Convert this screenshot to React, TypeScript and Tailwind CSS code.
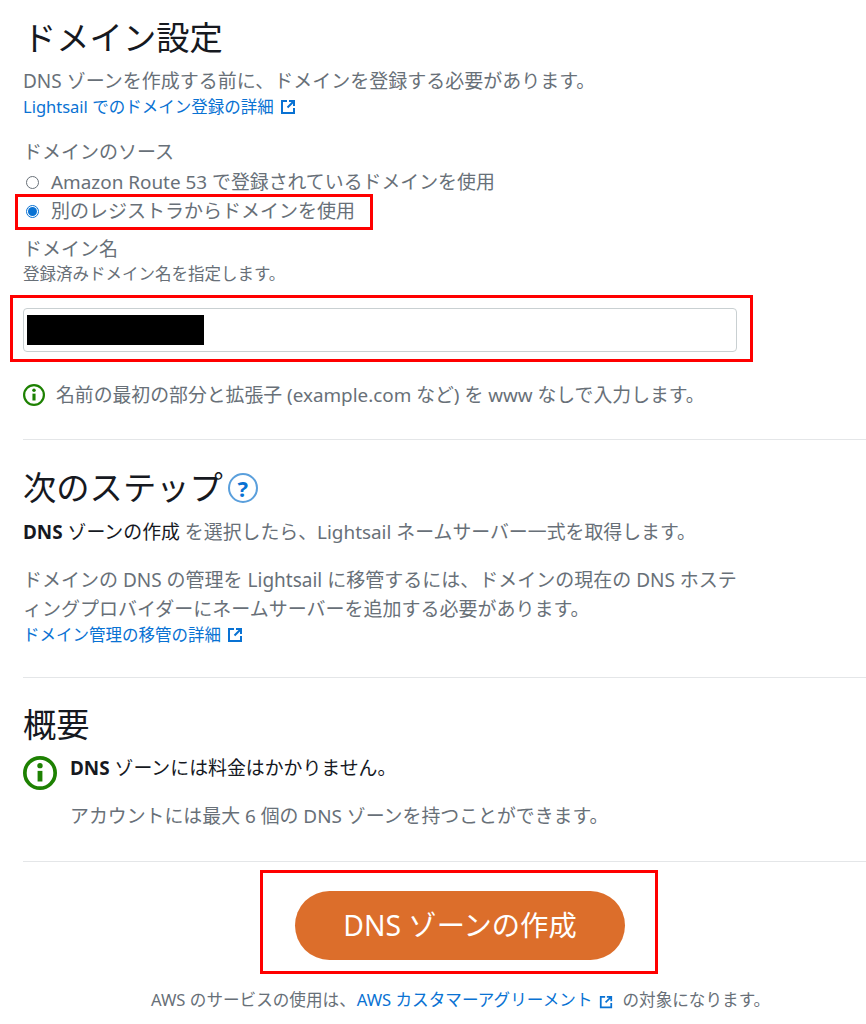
import React from "react";

function Ext({ size = 16 }: { size?: number }) {
  return (
    <svg width={size} height={size} viewBox="0 0 16 16" fill="none" stroke="currentColor" strokeWidth="2" className="inline-block shrink-0">
      <path d="M7 2H2v12h12V9" />
      <path d="M9 2h5v5M14 2 7.5 8.5" />
    </svg>
  );
}

function Info({ size, sw }: { size: number; sw: number }) {
  return (
    <svg width={size} height={size} viewBox="0 0 24 24" fill="none" className="shrink-0 text-[#1d8102]">
      <circle cx="12" cy="12" r={12 - sw / 2} stroke="currentColor" strokeWidth={sw} />
      <path d="M12 10.5V18" stroke="currentColor" strokeWidth="3.4" />
      <circle cx="12" cy="6.8" r="1.9" fill="currentColor" />
    </svg>
  );
}

export default function App() {
  const font = { fontFamily: '"Noto Sans", "Noto Sans CJK JP", sans-serif' };
  return (
    <div className="relative w-[866px] h-[1024px] overflow-hidden bg-white text-[#687078]" style={font}>
      <div className="pl-[23px] pt-[15px] flex flex-col">
        <h1 className="text-[33.3px] leading-[44px] text-[#16191f]">ドメイン設定</h1>
        <p className="mt-[10px] text-[19px] leading-[24px]">DNS ゾーンを作成する前に、ドメインを登録する必要があります。</p>
        <a className="mt-[2px] text-[16.5px] leading-[24px] text-[#0972d3] flex items-center gap-[6px]">
          Lightsail でのドメイン登録の詳細 <Ext />
        </a>

        <p className="mt-[21px] text-[19px] leading-[24px]">ドメインのソース</p>
        <div className="mt-[6px] h-[24px] flex items-center gap-[12px] text-[18.9px]">
          <span className="ml-[3px] w-[13px] h-[13px] rounded-full border border-[#687078]" />
          Amazon Route 53 で登録されているドメインを使用
        </div>
        <div className="mt-[5px] h-[24px] flex items-center gap-[12px] text-[19px]">
          <span className="ml-[3px] w-[13px] h-[13px] rounded-full border border-[#0972d3] flex items-center justify-center">
            <span className="w-[9px] h-[9px] rounded-full bg-[#0972d3]" />
          </span>
          別のレジストラからドメインを使用
        </div>

        <p className="mt-[14px] text-[19px] leading-[24px]">ドメイン名</p>
        <p className="mt-[3px] text-[16.5px] leading-[20px]">登録済みドメイン名を指定します。</p>
        <div className="mt-[24px] w-[714px] h-[44px] rounded-[4px] border-[1.5px] border-[#c9d0d2] flex items-center pl-[2.5px]">
          <div className="w-[177px] h-[30px] bg-black" />
        </div>
        <div className="mt-[31px] h-[24px] flex items-center gap-[11px] text-[18.85px]">
          <Info size={22} sw={2.4} />
          名前の最初の部分と拡張子 (example.com など) を www なしで入力します。
        </div>

        <div className="mt-[32px] h-px bg-[#e4e6e8]" />

        <div className="mt-[25px] h-[44px] flex items-center gap-[6px]">
          <h2 className="text-[33.3px] leading-[44px] text-[#16191f]">次のステップ</h2>
          <span className="mt-[2px] -ml-[1px] w-[30px] h-[30px] rounded-full border-2 border-[#5a9fdc] text-[#0972d3] text-[22px] font-bold flex items-center justify-center">?</span>
        </div>
        <p className="mt-[11px] text-[18.9px] leading-[24px]">
          <b className="text-[#16191f] font-bold">DNS</b> <span className="text-[#16191f]">ゾーンの作成</span> を選択したら、Lightsail ネームサーバー一式を取得します。
        </p>
        <p className="mt-[22px] w-[720px] text-[19px] leading-[29px]">
          ドメインの DNS の管理を Lightsail に移管するには、ドメインの現在の DNS ホスティングプロバイダーにネームサーバーを追加する必要があります。
        </p>
        <a className="-mt-[1px] text-[16.5px] leading-[24px] text-[#0972d3] flex items-center gap-[6px]">
          ドメイン管理の移管の詳細 <Ext />
        </a>

        <div className="mt-[30px] h-px bg-[#e4e6e8]" />

        <h2 className="mt-[24px] text-[33.3px] leading-[44px] text-[#16191f]">概要</h2>
        <div className="mt-[10px] flex gap-[13px]">
          <div>
            <Info size={34} sw={2.6} />
          </div>
          <div>
            <p className="text-[18.9px] leading-[24px] text-[#16191f]"><b>DNS</b> ゾーンには料金はかかりません。</p>
            <p className="mt-[24px] text-[18.9px] leading-[24px]">アカウントには最大 6 個の DNS ゾーンを持つことができます。</p>
          </div>
        </div>

        <div className="mt-[33px] h-px bg-[#e4e6e8]" />

        <div className="mt-[29px] ml-[272px] w-[330px] h-[69px] rounded-full bg-[#dc6e2b] text-white text-[28.3px] flex items-center justify-center">
          DNS ゾーンの作成
        </div>
        <p className="mt-[28px] ml-[128px] text-[16.6px] leading-[24px] whitespace-nowrap">
          AWS のサービスの使用は、<span className="ml-[1px] text-[#0972d3]">AWS カスタマーアグリーメント</span>
          <span className="text-[#0972d3] inline-flex align-middle ml-[6px]"><Ext size={14} /></span>
          <span className="ml-[10px]">の対象になります。</span>
        </p>
      </div>

      <div className="absolute left-[15px] top-[194px] w-[358px] h-[36px] border-[3px] border-[#ff0000]" />
      <div className="absolute left-[10px] top-[295px] w-[743px] h-[67px] border-[3px] border-[#ff0000]" />
      <div className="absolute left-[260px] top-[870px] w-[398px] h-[104px] border-[3px] border-[#ff0000]" />
    </div>
  );
}
